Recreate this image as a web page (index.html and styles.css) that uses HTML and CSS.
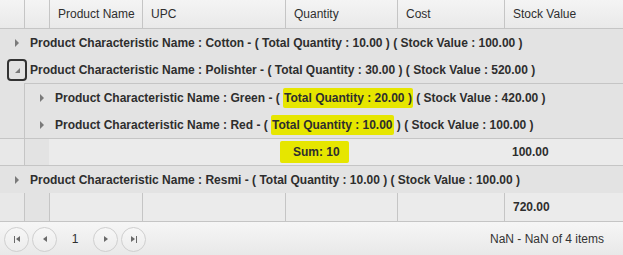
FILE: index.html
```html
<!DOCTYPE html>
<html lang="en">

<head>
    <meta charset="UTF-8">
    <title>Product Stock Grid</title>
    <link rel="stylesheet" href="styles.css">
</head>

<body>
    <div class="grid">
        <div class="row head">
            <div class="cell"></div>
            <div class="cell"></div>
            <div class="cell">Product Name</div>
            <div class="cell">UPC</div>
            <div class="cell">Quantity</div>
            <div class="cell">Cost</div>
            <div class="cell">Stock Value</div>
        </div>

        <div class="group">
            <span class="arrow"></span>
            <span>Product Characteristic Name : Cotton - ( Total Quantity : 10.00 ) ( Stock Value : 100.00 )</span>
        </div>

        <div class="group">
            <span class="toggle"><span class="collapse"></span></span>
            <span>Product Characteristic Name : Polishter - ( Total Quantity : 30.00 ) ( Stock Value : 520.00 )</span>
        </div>

        <div class="nested-wrap">
            <div class="nested">
                <div class="group sub">
                    <span class="arrow"></span>
                    <span>Product Characteristic Name : Green - ( <mark>Total Quantity : 20.00 )</mark> ( Stock Value : 420.00 )</span>
                </div>
                <div class="group sub">
                    <span class="arrow"></span>
                    <span>Product Characteristic Name : Red - ( <mark>Total Quantity : 10.00</mark> ) ( Stock Value : 100.00 )</span>
                </div>
            </div>
        </div>

        <div class="row foot sub-foot">
            <div class="cell"></div>
            <div class="cell group-cell"></div>
            <div class="cell"></div>
            <div class="cell"></div>
            <div class="cell"><mark>Sum: 10</mark></div>
            <div class="cell"></div>
            <div class="cell">100.00</div>
        </div>

        <div class="group">
            <span class="arrow"></span>
            <span>Product Characteristic Name : Resmi - ( Total Quantity : 10.00 ) ( Stock Value : 100.00 )</span>
        </div>

        <div class="row foot total">
            <div class="cell"></div>
            <div class="cell group-cell"></div>
            <div class="cell"></div>
            <div class="cell"></div>
            <div class="cell"></div>
            <div class="cell"></div>
            <div class="cell">720.00</div>
        </div>

        <div class="pager">
            <span class="page-btn"><span class="bar"></span><span class="tri left"></span></span>
            <span class="page-btn"><span class="tri left"></span></span>
            <span class="page-num">1</span>
            <span class="page-btn"><span class="tri right"></span></span>
            <span class="page-btn"><span class="tri right"></span><span class="bar"></span></span>
            <span class="pager-info">NaN - NaN of 4 items</span>
        </div>
    </div>
</body>

</html>
```

FILE: styles.css
```css
* {
    margin: 0;
    padding: 0;
    box-sizing: border-box;
}

body {
    font-family: 'Liberation Sans', Arial, sans-serif;
    font-size: 12px;
    color: #2e2e2e;
    background: #fff;
    overflow: hidden;
}

.grid {
    width: 623px;
}

.row {
    display: grid;
    grid-template-columns: 24px 25px 93px 143px 112px 107px 1fr;
}

.cell {
    display: flex;
    align-items: center;
    padding-left: 8px;
    white-space: nowrap;
}

.head {
    height: 29px;
    background: linear-gradient(#f4f4f4, #e9e9e9);
    border-bottom: 1px solid #c5c5c5;
}

.head .cell + .cell,
.total .cell + .cell {
    border-left: 1px solid #c5c5c5;
}

.group {
    display: flex;
    align-items: center;
    height: 27px;
    background: #e3e3e3;
    font-weight: bold;
    white-space: nowrap;
}

.arrow {
    width: 0;
    height: 0;
    margin-left: 15px;
    margin-right: 11px;
    border-left: 4px solid #7a7a7a;
    border-top: 4px solid transparent;
    border-bottom: 4px solid transparent;
}

.toggle {
    display: flex;
    align-items: center;
    justify-content: center;
    width: 20px;
    height: 22px;
    margin-left: 7px;
    margin-right: 3px;
    border: 2px solid #333;
    border-radius: 4px;
}

.collapse {
    width: 0;
    height: 0;
    margin-top: 2px;
    border-left: 5px solid transparent;
    border-bottom: 5px solid #7a7a7a;
}

.nested-wrap {
    padding-left: 24px;
    background: #e3e3e3;
    border-bottom: 1px solid #c5c5c5;
}

.nested {
    border-left: 1px solid #c5c5c5;
    border-top: 1px solid #c5c5c5;
}

mark {
    background: #e6e600;
    color: inherit;
    padding: 3px 1px;
    border-radius: 2px;
}

.foot {
    font-weight: bold;
    background: #ebebeb;
}

.foot .cell:first-child {
    background: #e8e8e8;
}

.foot .group-cell {
    background: #e3e3e3;
    border-left: 1px solid #c5c5c5;
}

.sub-foot {
    height: 27px;
    border-bottom: 1px solid #c5c5c5;
}

.sub-foot mark {
    padding: 4px 9px 4px 13px;
    margin-left: -13px;
}

.total {
    height: 29px;
    border-bottom: 1px solid #c5c5c5;
}

.pager {
    display: flex;
    align-items: center;
    height: 34px;
    padding-left: 4px;
    background: linear-gradient(#f6f6f6, #e8e8e8);
}

.page-btn {
    display: flex;
    align-items: center;
    justify-content: center;
    gap: 1px;
    width: 25px;
    height: 25px;
    margin-right: 3px;
    border: 1px solid #cfcfcf;
    border-radius: 50%;
    background: linear-gradient(#f7f7f7, #ececec);
}

.page-num {
    width: 30px;
    margin-right: 3px;
    text-align: center;
}

.bar {
    width: 1px;
    height: 7px;
    background: #6a6a6a;
}

.tri {
    width: 0;
    height: 0;
    border-top: 3.5px solid transparent;
    border-bottom: 3.5px solid transparent;
}

.tri.left {
    border-right: 4px solid #6a6a6a;
}

.tri.right {
    border-left: 4px solid #6a6a6a;
}

.pager-info {
    margin-left: auto;
    padding-right: 19px;
    color: #333;
}
```
